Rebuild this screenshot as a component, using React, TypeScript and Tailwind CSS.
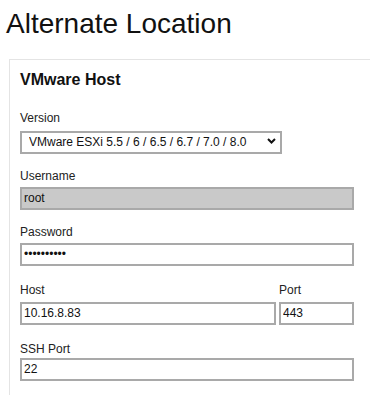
import React from "react";

function Field({
  label,
  value,
  type = "text",
  disabled = false,
  className = "",
  labelGap = "mb-[3px]"
}: {
  label: string;
  value: string;
  type?: string;
  disabled?: boolean;
  className?: string;
  labelGap?: string;
}) {
  return (
    <div className={`flex flex-col ${className}`}>
      <label className={`block text-[12px] leading-[16px] text-[#222] ${labelGap}`}>{label}</label>
      <input
        type={type}
        value={value}
        readOnly
        disabled={disabled}
        className={`h-[23px] w-full border-2 border-[#a9a9a9] px-[2px] text-[12px] text-[#111] outline-none ${
          disabled ? "bg-[#c9c9c9]" : "bg-white"
        }`}
      />
    </div>
  );
}

export default function App() {
  return (
    <div className="h-[395px] w-[370px] overflow-hidden bg-white font-['Liberation_Sans',Arial,sans-serif]">
      <h1 className="pl-[6px] pt-[7px] text-[28px] leading-[34px] text-[#111]">Alternate Location</h1>

      {/* Host settings panel, runs off to the right */}
      <div className="ml-[9px] mt-[18px] h-[400px] border-l border-t border-[#e4e4e4] pl-[10px] pt-[10px]">
        <h2 className="text-[16px] font-bold leading-[20px] text-[#111]">VMware Host</h2>

        <div className="mt-[20px] flex w-[334px] flex-col">
          <div className="mb-[14px] flex flex-col">
            <label className="mb-[3px] block text-[12px] leading-[16px] text-[#222]">Version</label>
            <div className="relative w-[262px]">
              <select
                defaultValue="esxi"
                className="h-[23px] w-full appearance-none border-2 border-[#a9a9a9] bg-white pl-[7px] pr-[20px] text-[12px] text-[#111] outline-none"
              >
                <option value="esxi">VMware ESXi 5.5 / 6 / 6.5 / 6.7 / 7.0 / 8.0</option>
              </select>
              <svg
                className="pointer-events-none absolute right-[6px] top-[9px]"
                width="9"
                height="6"
                viewBox="0 0 9 6"
              >
                <path d="M1 1l3.5 3.5L8 1" fill="none" stroke="#111" strokeWidth="2" />
              </svg>
            </div>
          </div>

          <Field label="Username" value="root" disabled className="mb-[14px]" />
          <Field label="Password" value="1234567890" type="password" className="mb-[16px]" />

          <div className="mb-[16px] flex gap-[3px]">
            <Field label="Host" value="10.16.8.83" className="flex-1" labelGap="mb-[4px]" />
            <Field label="Port" value="443" className="w-[75px]" labelGap="mb-[4px]" />
          </div>

          <Field label="SSH Port" value="22" labelGap="mb-[1px]" />
        </div>
      </div>
    </div>
  );
}
